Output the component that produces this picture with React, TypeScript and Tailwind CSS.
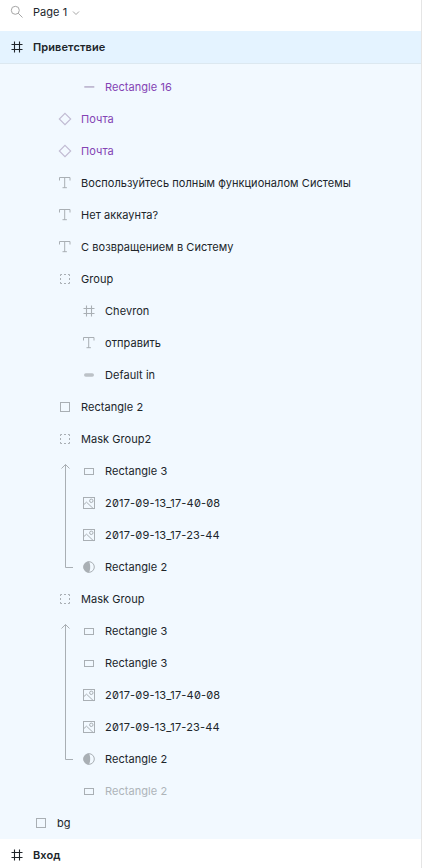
import React from "react";

type IconKind =
  | "frame"
  | "line"
  | "component"
  | "text"
  | "group"
  | "pill"
  | "rect"
  | "wideRect"
  | "image"
  | "mask";

function LayerIcon({ kind }: { kind: IconKind }) {
  const stroke = { fill: "none", stroke: "currentColor", strokeWidth: 1 };
  return (
    <svg width="16" height="16" viewBox="0 0 16 16" className="block shrink-0">
      {kind === "frame" && <path {...stroke} strokeWidth={1.1} d="M5.5 2.5v11M10.5 2.5v11M2.5 5.5h11M2.5 10.5h11" />}
      {kind === "line" && <path {...stroke} strokeWidth={1.8} d="M3.3 7.9h10" />}
      {kind === "component" && <path {...stroke} strokeWidth={1.1} d="M8 2.3 13.7 8 8 13.7 2.3 8z" />}
      {kind === "text" && <path {...stroke} d="M2.5 5.5v-3h10.5v3M7.7 2.5v10.5M5.5 12.7h4.4" />}
      {kind === "group" && (
        <path
          {...stroke}
          d="M3.5 5v-1.5h1.5M7 3.5h2M11 3.5h1.5v1.500M12.500 7v2M12.500 11v1.500h-1.500M9 12.500H7M5 12.500h-1.500v-1.500M3.500 9V7"
        />
      )}
      {kind === "pill" && <rect x="3" y="6.2" width="10" height="3.6" rx="1.8" fill="currentColor" opacity=".75" />}
      {kind === "rect" && <rect {...stroke} x="3.5" y="3.5" width="9" height="9" />}
      {kind === "wideRect" && <rect {...stroke} x="3.5" y="5.5" width="9" height="6" />}
      {kind === "image" && (
        <g {...stroke}>
          <rect x="2.5" y="2.5" width="11" height="11" />
          <circle cx="10.3" cy="5.8" r="1.7" />
          <path d="M2.8 9.6 5.5 7.2l6.7 6.3" />
        </g>
      )}
      {kind === "mask" && (
        <g>
          <circle {...stroke} cx="8" cy="8" r="5.3" />
          <path fill="currentColor" d="M8 2.5a5.5 5.5 0 0 0 0 11c.8-1.5 1.2-3.4 1.2-5.5S8.8 4 8 2.5z" />
        </g>
      )}
    </svg>
  );
}

type Layer = { icon: IconKind; name: string; tone?: "purple" | "faded"; slashed?: boolean };

function LayerRow({ icon, name, tone, slashed }: Layer) {
  const iconColor = tone === "purple" ? "text-[#c0bad2]" : "text-[#a9afb4]";
  const textColor =
    tone === "purple" ? "text-[#8443b4]" : tone === "faded" ? "text-[#aeb4b9]" : "text-[#20252a]";
  return (
    <div className="flex h-8 items-center gap-2">
      <span className={iconColor}>
        <LayerIcon kind={icon} />
      </span>
      <span className={`whitespace-nowrap ${textColor} ${slashed ? "tracking-[0.18px] slashed-zero" : ""}`}>
        {name}
      </span>
    </div>
  );
}

function Rows({ layers }: { layers: Layer[] }) {
  return (
    <>
      {layers.map((layer, i) => (
        <LayerRow key={i} {...layer} />
      ))}
    </>
  );
}

function MaskedRows({ layers }: { layers: Layer[] }) {
  const height = layers.length * 32;
  return (
    <div className="flex gap-2">
      <svg width="16" height={height} fill="none" stroke="#a9afb4" className="shrink-0">
        <path d={`M8.5 9.5V${height - 15.5}H16M4.5 13.5l4-4 4 4`} />
      </svg>
      <div>
        <Rows layers={layers} />
      </div>
    </div>
  );
}

const nested: Layer[] = [
  { icon: "component", name: "Почта", tone: "purple" },
  { icon: "component", name: "Почта", tone: "purple" },
  { icon: "text", name: "Воспользуйтесь полным функционалом Системы" },
  { icon: "text", name: "Нет аккаунта?" },
  { icon: "text", name: "С возвращением в Систему" },
  { icon: "group", name: "Group" },
];

const firstMask: Layer[] = [
  { icon: "wideRect", name: "Rectangle 3" },
  { icon: "image", name: "2017-09-13_17-40-08", slashed: true },
  { icon: "image", name: "2017-09-13_17-23-44", slashed: true },
  { icon: "mask", name: "Rectangle 2" },
];

const secondMask: Layer[] = [{ icon: "wideRect", name: "Rectangle 3" }, ...firstMask];

export default function App() {
  return (
    <div className="h-[868px] w-[422px] overflow-hidden border-r border-[#e5e5e5] bg-white font-['Inter',sans-serif] text-[11px] leading-4 tracking-[0.055px] text-[#20252a]">
      <header className="flex h-[31px] items-start gap-2 pt-1 pl-[9px]">
        <svg width="16" height="16" viewBox="0 0 16 16" fill="none" stroke="#a6a6a6">
          <circle cx="6.3" cy="6.3" r="4" />
          <path d="m9.2 9.2 4.3 4.3" />
        </svg>
        <span>Page 1</span>
        <svg width="8" height="16" viewBox="0 0 8 16" fill="none" stroke="#a6a6a6" className="-ml-[3px]">
          <path d="m1 7.5 3 3 3-3" />
        </svg>
      </header>
      <div className="flex h-[33px] items-center gap-2 border-b border-[#dce8f0] bg-[#e4f3ff] pl-[9px] font-semibold tracking-[0.1px]">
        <LayerIcon kind="frame" />
        <span>Приветствие</span>
      </div>
      <main className="bg-[#f2f9ff] pt-[7px]">
        <div className="pl-[81px]">
          <LayerRow icon="line" name="Rectangle 16" tone="purple" />
        </div>
        <div className="pl-[57px]">
          <Rows layers={nested} />
          <div className="pl-6">
            <LayerRow icon="frame" name="Chevron" />
            <LayerRow icon="text" name="отправить" />
            <LayerRow icon="pill" name="Default in" />
          </div>
          <LayerRow icon="rect" name="Rectangle 2" />
          <LayerRow icon="group" name="Mask Group2" />
          <MaskedRows layers={firstMask} />
          <LayerRow icon="group" name="Mask Group" />
          <MaskedRows layers={secondMask} />
          <div className="pl-6">
            <LayerRow icon="wideRect" name="Rectangle 2" tone="faded" />
          </div>
        </div>
        <div className="pl-[33px]">
          <LayerRow icon="rect" name="bg" />
        </div>
      </main>
      <div className="flex h-8 items-center gap-2 pl-[9px] font-semibold">
        <LayerIcon kind="frame" />
        <span>Вход</span>
      </div>
    </div>
  );
}
